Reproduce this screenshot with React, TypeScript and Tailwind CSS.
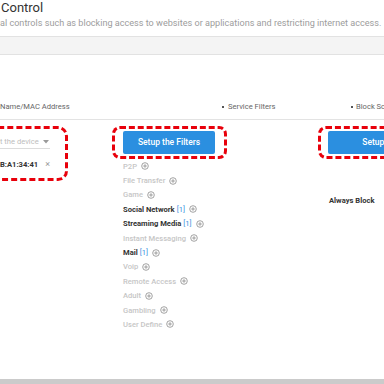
import React from "react";

const Plus = () => (
  <svg width="8" height="8" viewBox="0 0 8 8" className="shrink-0 ml-[4px]">
    <circle cx="4" cy="4" r="3.3" fill="none" stroke="#8c8c8c" strokeWidth="0.8" />
    <path d="M4 2.2V5.8M2.2 4H5.8" stroke="#8c8c8c" strokeWidth="0.8" />
  </svg>
);

type Item = { name: string; on?: boolean; count?: number };
const items: Item[] = [
  { name: "P2P" },
  { name: "File Transfer" },
  { name: "Game" },
  { name: "Social Network", on: true, count: 1 },
  { name: "Streaming Media", on: true, count: 1 },
  { name: "Instant Messaging" },
  { name: "Mail", on: true, count: 1 },
  { name: "Voip" },
  { name: "Remote Access" },
  { name: "Adult" },
  { name: "Gambling" },
  { name: "User Define" },
];

const Hidden = ({ children }: { children: React.ReactNode }) => (
  <span className="w-0 flex justify-end whitespace-pre">{children}</span>
);

export default function App() {
  return (
    <div
      className="relative w-[384px] h-[384px] overflow-hidden bg-white flex flex-col"
      style={{ fontFamily: "Roboto, 'Liberation Sans', sans-serif" }}
    >
      {/* title */}
      <div className="flex text-[13px] leading-[16px] font-normal text-[#333] pl-[1px] whitespace-nowrap">
        <Hidden>Parental </Hidden>
        <span>Control</span>
      </div>
      <div className="flex text-[9.1px] leading-[12px] text-[#9d9d9d] mt-[1px] whitespace-nowrap">
        <Hidden>Parent</Hidden>
        <span>al controls such as blocking access to websites or applications and restricting internet access.</span>
      </div>
      {/* gray bar */}
      <div className="mt-[7px] h-[19px] shrink-0 bg-[#f4f4f4] border-t border-b border-[#e2e2e2]" />

      {/* table header */}
      <div className="flex pt-[46px] pb-[7px] border-b border-[#e3e3e3] text-[7.6px] leading-[11px] text-[#666] whitespace-nowrap">
        <div className="w-[112px] shrink-0 flex">
          <Hidden>Device </Hidden>
          <span>Name/MAC Address</span>
        </div>
        <div className="w-[206px] shrink-0 flex items-center">
          <span className="ml-[110px] w-[2px] h-[2px] bg-[#555] mr-[4px]" />
          <span>Service Filters</span>
        </div>
        <div className="flex-1 flex items-center">
          <span className="ml-[33px] w-[2px] h-[2px] bg-[#555] mr-[3px]" />
          <span>Block Schedule</span>
        </div>
      </div>

      {/* content */}
      <div className="flex items-start text-[7.6px] leading-[11px] whitespace-nowrap">
        {/* col 1 */}
        <div className="w-[112px] shrink-0">
          <div className="-ml-[30px] mt-[6px] w-[98px] h-[55px] border-[3px] border-dashed border-[#e8000b] rounded-[10px] pl-[27px] pt-[6px]">
            <div className="-ml-[4px] w-[54px] h-[14px] border-b border-[#dcdcdc] flex items-center text-[#bdbdbd]">
              <Hidden>Sele</Hidden>
              <span>ct the device</span>
              <svg width="6" height="4" viewBox="0 0 6 4" className="ml-auto mr-[1px]">
                <path d="M0 0H6L3 3.5Z" fill="#9a9a9a" />
              </svg>
            </div>
            <div className="flex items-center mt-[9px] h-[12px]">
              <Hidden>
                <span className="font-bold text-[#333]">E8:9F:6</span>
              </Hidden>
              <span className="font-bold text-[#333]">B:A1:34:41</span>
              <span className="ml-[7px] text-[#9a9a9a] text-[9px]">×</span>
            </div>
          </div>
        </div>

        {/* col 2 */}
        <div className="w-[206px] shrink-0">
          <div className="mt-[6px] w-[115px] h-[33px] border-[3px] border-dashed border-[#e8000b] rounded-[8px] pl-[8px] pt-[2px]">
            <div className="w-[92px] h-[23px] rounded-[2px] bg-[#2b8fe0] text-white text-[8.5px] font-medium flex items-center justify-center">
              Setup the Filters
            </div>
          </div>
          <div className="ml-[11px] flex flex-col">
            {items.map((it) => (
              <div key={it.name} className="h-[14.4px] flex items-center">
                <span className={it.on ? "font-bold text-[#333]" : "font-medium text-[#c6c6c6]"}>{it.name}</span>
                {it.count ? <span className="ml-[2px] text-[#3a8fe0]">[{it.count}]</span> : null}
                <Plus />
              </div>
            ))}
          </div>
        </div>

        {/* col 3 */}
        <div className="flex-1">
          <div className="mt-[6px] w-[165px] h-[33px] border-[3px] border-dashed border-[#e8000b] rounded-[8px] pl-[7px] pt-[2px]">
            <div className="w-[142px] h-[23px] rounded-[2px] bg-[#2b8fe0] text-white text-[8.5px] font-medium flex items-center justify-center">
              Setup the Schedule
            </div>
          </div>
          <div className="ml-[11px] mt-[36px] font-bold text-[#333]">Always Block</div>
        </div>
      </div>

      <div className="absolute left-0 right-0 bottom-0 h-[5px] bg-[#cbcbcb]" />
    </div>
  );
}
